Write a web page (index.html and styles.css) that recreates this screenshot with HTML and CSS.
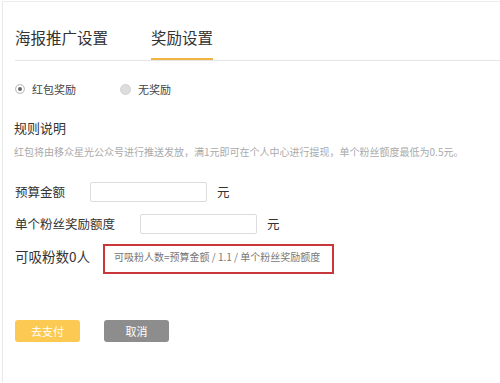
FILE: index.html
```html
<!DOCTYPE html>
<html lang="zh-CN">
<head>
<meta charset="utf-8">
<link rel="stylesheet" href="styles.css">
</head>
<body>
<div class="page">
  <div class="tabs">
    <div class="tab">海报推广设置</div>
    <div class="tab active">奖励设置</div>
  </div>
  <div class="radios">
    <label class="radio"><span class="dot checked"></span>红包奖励</label>
    <label class="radio"><span class="dot"></span>无奖励</label>
  </div>
  <div class="rule-title">规则说明</div>
  <div class="rule-desc">红包将由移众星光公众号进行推送发放，满1元即可在个人中心进行提现，单个粉丝额度最低为0.5元。</div>
  <div class="row row1">
    <span class="label">预算金额</span>
    <span class="input"></span>
    <span class="unit">元</span>
  </div>
  <div class="row row2">
    <span class="label">单个粉丝奖励额度</span>
    <span class="input"></span>
    <span class="unit">元</span>
  </div>
  <div class="row row3">
    <span class="label big">可吸粉数0人</span>
    <div class="formula">可吸粉人数=预算金额 / 1.1 / 单个粉丝奖励额度</div>
  </div>
  <div class="buttons">
    <span class="btn pay">去支付</span>
    <span class="btn cancel">取消</span>
  </div>
</div>
</body>
</html>
```
FILE: styles.css
```css
html, body {
  margin: 0;
  padding: 0;
  background: #fff;
}
body {
  font-family: "Noto Sans CJK SC", "Noto Sans", sans-serif;
  color: #333;
  padding: 1px 0 0 2px;
  height: 382px;
  box-sizing: border-box;
  overflow: hidden;
}
.page {
  border-left: 1px solid #e8e8e8;
  border-top: 1px solid #ededed;
  height: 100%;
  padding-left: 11px;
  box-sizing: border-box;
}
.tabs {
  display: flex;
  gap: 43px;
  border-bottom: 1px solid #e6e6e6;
  margin-left: 1px;
}
.tab {
  font-size: 15.5px;
  line-height: 20px;
  padding: 25px 0 11px;
  border-bottom: 2px solid transparent;
  color: #333;
}
.tab.active {
  border-bottom-color: #efb443;
}
.radios {
  display: flex;
  gap: 44px;
  margin-top: 20px;
  padding-left: 1px;
  font-size: 11px;
  line-height: 16px;
  color: #444;
}
.radio {
  display: flex;
  align-items: center;
  gap: 7px;
}
.dot {
  width: 9px;
  height: 9px;
  border-radius: 50%;
  background: #ddd;
  border: 1px solid #d2d2d2;
  box-sizing: content-box;
}
.dot.checked {
  background: #666;
  border: 1px solid #ccc;
  box-shadow: inset 0 0 0 2px #fff;
  width: 8px;
  height: 8px;
}
.rule-title {
  margin-top: 22px;
  font-size: 13px;
  line-height: 18px;
  color: #333;
}
.rule-desc {
  margin-top: 8px;
  font-size: 10px;
  line-height: 14px;
  color: #aaa;
  white-space: nowrap;
}
.row {
  display: flex;
  align-items: center;
  font-size: 12.5px;
  color: #333;
}
.row1 { margin-top: 23px; }
.row2 { margin-top: 12px; }
.row3 {
  margin-top: 10px;
  align-items: flex-start;
}
.label {
  line-height: 20px;
  margin-right: 25px;
  padding-left: 1px;
}
.label.big {
  font-size: 13.5px;
  line-height: 24px;
  margin-right: 13px;
}
.input {
  display: block;
  width: 117px;
  height: 20px;
  border: 1px solid #dcdcdc;
  box-sizing: border-box;
  border-radius: 2px;
}
.unit {
  margin-left: 10px;
  line-height: 20px;
}
.formula {
  width: 231px;
  height: 30px;
  border: 2px solid #c9373b;
  box-sizing: border-box;
  padding: 3px 0 0 9px;
  font-size: 10px;
  line-height: 16px;
  color: #777;
  white-space: nowrap;
}
.buttons {
  display: flex;
  gap: 24px;
  margin-top: 46px;
  padding-left: 1px;
}
.btn {
  display: block;
  width: 65px;
  height: 22px;
  border-radius: 3px;
  color: #fff;
  font-size: 11px;
  line-height: 22px;
  text-align: center;
}
.btn.pay { background: #fcca52; }
.btn.cancel { background: #8d8d8d; }
```
